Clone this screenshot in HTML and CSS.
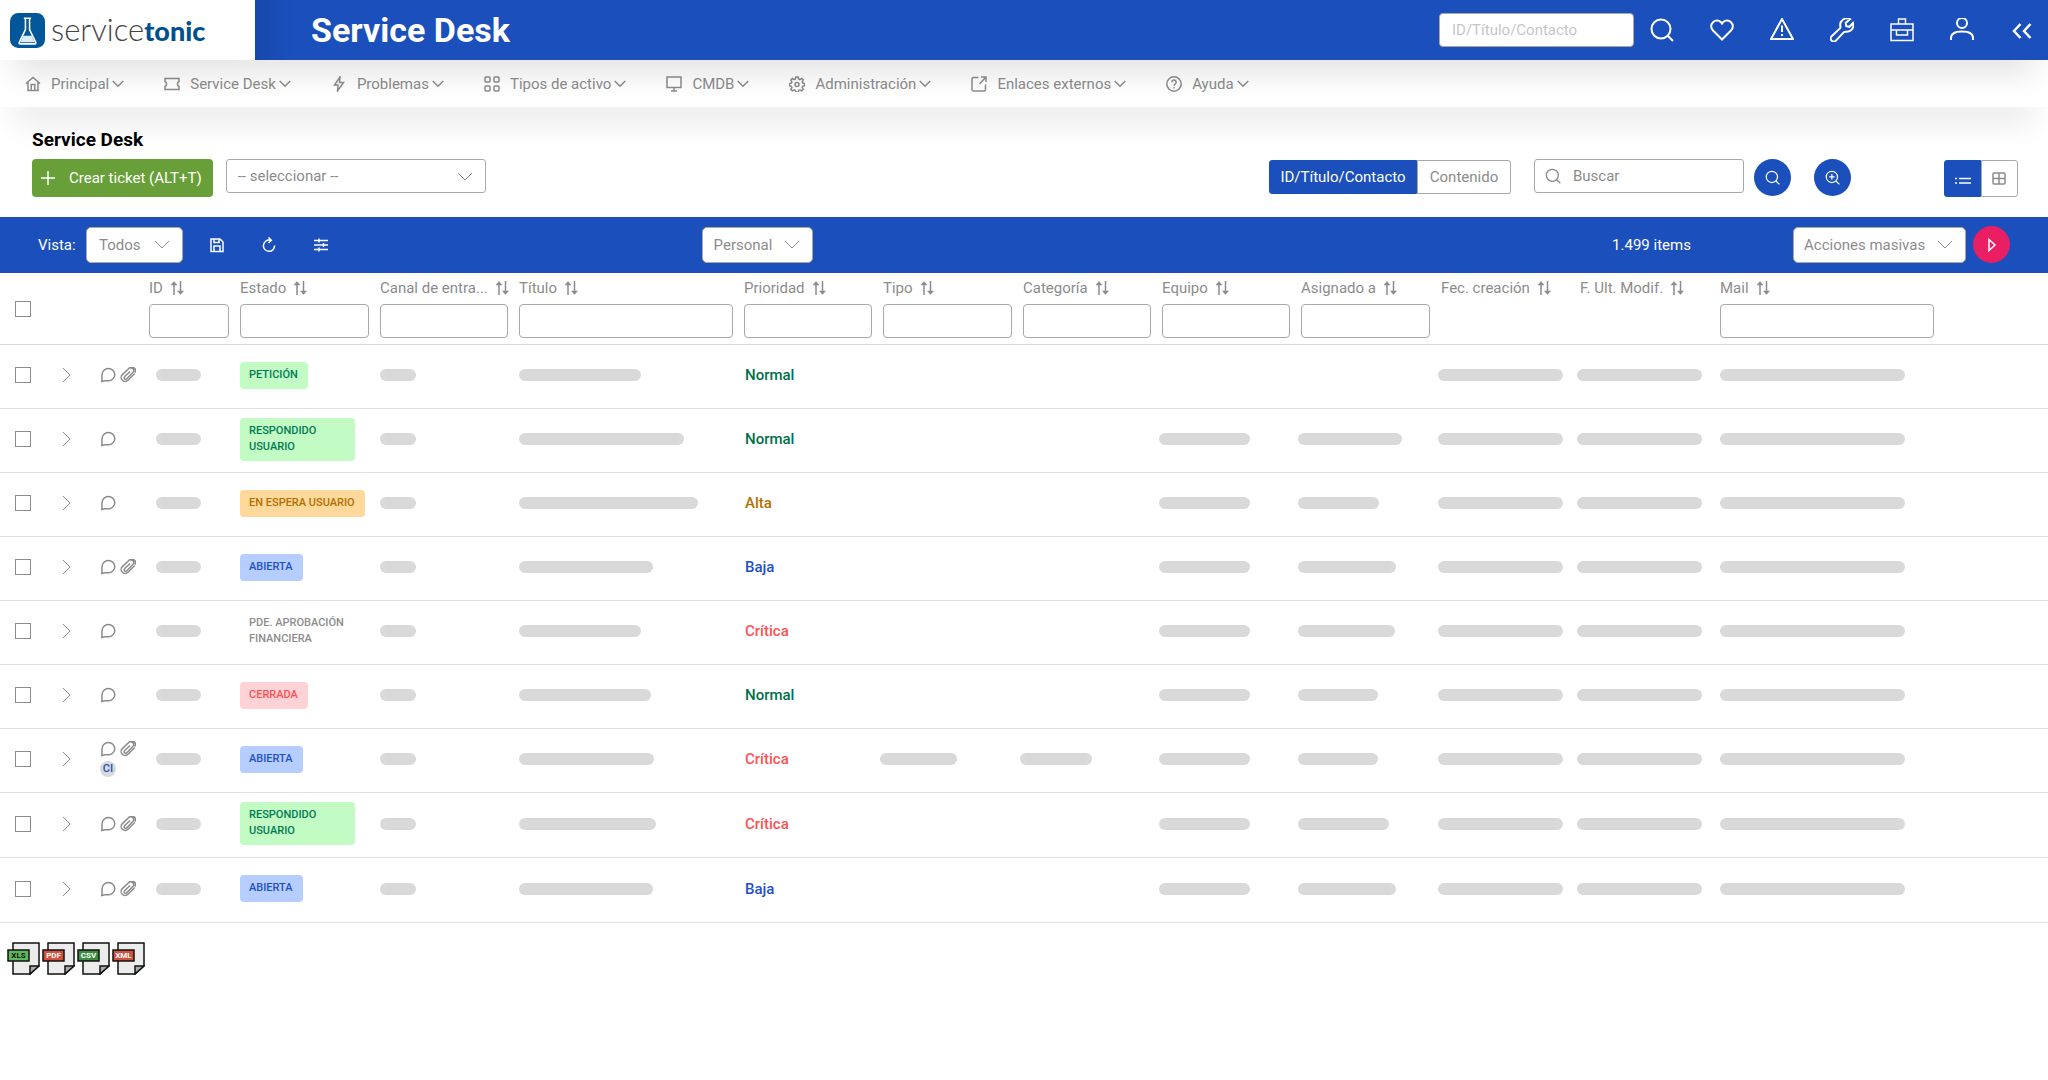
FILE: index.html
```html
<!DOCTYPE html>
<html lang="es">
<head>
<meta charset="utf-8">
<meta name="viewport" content="width=device-width, initial-scale=1">
<title>Service Desk</title>
<link rel="stylesheet" href="styles.css">
</head>
<body>
<svg class="sprite" aria-hidden="true">
  <symbol id="i-chevron" viewBox="0 0 16 10"><path d="M1 1l7 7 7-7"/></symbol>
  <symbol id="i-right" viewBox="0 0 10 16"><path d="M1 1l7 7-7 7"/></symbol>
  <symbol id="i-search" viewBox="0 0 24 24"><circle cx="11" cy="11" r="9"/><path d="M17.5 17.5L23 23"/></symbol>
  <symbol id="i-sort" viewBox="0 0 14 14"><path d="M4 14V2M10.500 0v12"/><path fill="currentColor" stroke-width=".5" d="M1 4L4 .500 7 4zM7.500 10l3 3.500 3-3.500z"/></symbol>
  <symbol id="i-comment" viewBox="0 0 16 16"><path d="M2 14.300V8A6.300 6.300 0 0 1 14.800 7.800 6.300 6.300 0 0 1 8.500 13.800H4.500L1 14.800"/></symbol>
  <symbol id="i-clip" viewBox="0 0 16 16"><path d="M14.700 6.500L8 13.300a4 4 0 0 1-5.700-5.700L8.500 1.800a2.800 2.800 0 0 1 4.500 3.500L6.800 11.800a1.500 1.500 0 0 1-2.300-2L10 4.500M10.500 1.500a2.900 2.900 0 0 1 4.200 4"/></symbol>
  <symbol id="i-file" viewBox="0 0 33 33"><path fill="#ececec" stroke="#111" stroke-width="1.500" d="M6 1h26v23l-9 8H6z"/><path fill="#aaa" stroke="#111" stroke-width="1.500" d="M23 32v-8h9z"/></symbol>
</svg>

<header class="top">
  <a class="brand" href="#" aria-label="servicetonic">
    <svg class="brand-mark" viewBox="0 0 34 34" aria-hidden="true"><rect width="34" height="34" rx="8" fill="#02579a"/><g fill="none" stroke="#fff" stroke-width="1.500"><path d="M13.500 5h7M15 5v11L9 28.500q-.500 1.500 1 1.500h14q1.500 0 1-1.500L19 16V5"/></g><path fill="#dcebf5" d="M13 22h8l3 6.500H10z"/></svg>
    <span class="brand-name">service<b>tonic</b></span>
  </a>
  <div class="top-main">
    <p class="top-title">Service Desk</p>
    <div class="top-tools">
      <input class="top-search" type="text" placeholder="ID/Título/Contacto" aria-label="ID/Título/Contacto">
      <button class="tool" aria-label="Buscar"><svg viewBox="0 0 24 24"><circle cx="11" cy="11" r="9.500"/><path d="M18 18l5 5"/></svg></button>
      <button class="tool" aria-label="Favoritos"><svg viewBox="0 0 24 24"><path d="M12 21.500L3 12.500A5.600 5.600 0 0 1 3 4.200a5.500 5.500 0 0 1 8 0L12 5.500l1-1.300a5.500 5.500 0 0 1 8 0 5.600 5.600 0 0 1 0 8.300z"/></svg></button>
      <button class="tool" aria-label="Alertas"><svg viewBox="0 0 24 24"><path d="M12 1L23 21H1zM12 7.500V14M12 16v2"/></svg></button>
      <button class="tool" aria-label="Herramientas"><svg viewBox="0 0 24 24"><path d="M20 1.200a6.600 6.600 0 0 0-9.600 7.300q.200 1.200-.700 2.100L1.600 18.300a3 3 0 0 0 4.300 4.300l7.800-8.200q.900-.900 2.100-.700A6.600 6.600 0 0 0 23 5l-3.500 3.800-3.200-.600-.600-3.300z"/></svg></button>
      <button class="tool" aria-label="Maletín"><svg viewBox="0 0 24 24"><path stroke-width="1.500" d="M1 6h22v16.500H1zM8.500 6V1h7v5M1 12h22M6.500 12v5h11v-5"/></svg></button>
      <button class="tool" aria-label="Usuario"><svg viewBox="0 0 24 24"><circle cx="12" cy="5" r="5"/><path d="M1 22v-2c0-4 4-6.500 11-6.500s11 2.500 11 6.500v2"/></svg></button>
      <button class="tool" aria-label="Contraer"><svg viewBox="0 0 24 24"><path stroke-width="2.500" d="M10.500 6L4 13l6.500 7M20.500 6L14 13l6.500 7"/></svg></button>
    </div>
  </div>
</header>

<nav class="menu">
  <button><svg class="mi" viewBox="0 0 16 16"><path d="M1 7.500L8 1.500l7 6M3 6v8.500h10V6M6.200 14.500V8.500h3.600v6"/></svg><span>Principal</span><svg class="mc"><use href="#i-chevron"/></svg></button>
  <button><svg class="mi" viewBox="0 0 16 16"><path d="M1 2.500h14v3a2.800 2.800 0 0 0 0 5v3H1v-3a2.800 2.800 0 0 0 0-5z"/></svg><span>Service Desk</span><svg class="mc"><use href="#i-chevron"/></svg></button>
  <button><svg class="mi" viewBox="0 0 16 16"><path d="M9 1L3.500 9H7l-.500 6L12.500 6.500H8.500z"/></svg><span>Problemas</span><svg class="mc"><use href="#i-chevron"/></svg></button>
  <button><svg class="mi" viewBox="0 0 16 16"><rect x="1" y="1" width="5" height="5" rx="1"/><rect x="10" y="1" width="5" height="5" rx="1"/><rect x="1" y="10" width="5" height="5" rx="1"/><rect x="10" y="10" width="5" height="5" rx="1"/></svg><span>Tipos de activo</span><svg class="mc"><use href="#i-chevron"/></svg></button>
  <button><svg class="mi" viewBox="0 0 16 16"><path d="M1 1h14v10.500H1zM8 11.500V15M5 15h6"/></svg><span>CMDB</span><svg class="mc"><use href="#i-chevron"/></svg></button>
  <button><svg class="mi" viewBox="0 0 16 16"><path d="M6.800 1h2.400l.400 2 1.300.600 1.800-1.100 1.600 1.700-1.100 1.700.500 1.200 1.900.500v2.200l-2 .500-.500 1.200 1.100 1.800-1.600 1.600-1.700-1.100-1.300.600-.400 1.900H6.800l-.400-1.900-1.300-.600-1.700 1.100-1.600-1.600 1.100-1.800-.500-1.200-2-.500V7.600l2-.500.500-1.200-1.100-1.700 1.600-1.700 1.700 1.100 1.300-.600z"/><circle cx="8" cy="8.500" r="2"/></svg><span>Administración</span><svg class="mc"><use href="#i-chevron"/></svg></button>
  <button><svg class="mi" viewBox="0 0 16 16"><path d="M7.500 1.500h-5A1.500 1.500 0 0 0 1 3v10.500A1.500 1.500 0 0 0 2.500 15H13a1.500 1.500 0 0 0 1.500-1.500v-5M10 1h5v5M15 1L8.500 8"/></svg><span>Enlaces externos</span><svg class="mc"><use href="#i-chevron"/></svg></button>
  <button><svg class="mi" viewBox="0 0 16 16"><circle cx="8" cy="8" r="7.200"/><path d="M5.800 6.200a2.200 2.200 0 1 1 3.300 1.900Q8 8.700 8 9.800M8 11.200v1.300"/></svg><span>Ayuda</span><svg class="mc"><use href="#i-chevron"/></svg></button>
</nav>

<main>
  <section class="actions">
    <h1>Service Desk</h1>
    <div class="actions-row">
      <button class="create"><svg viewBox="0 0 14 14"><path d="M7 0v14M0 7h14"/></svg><span>Crear ticket (ALT+T)</span></button>
      <span class="pick pick-wide"><select aria-label="Seleccionar"><option>-- seleccionar --</option></select><svg><use href="#i-chevron"/></svg></span>
      <div class="scope"><button class="on">ID/Título/Contacto</button><button>Contenido</button></div>
      <label class="find"><svg><use href="#i-search"/></svg><input type="text" placeholder="Buscar" aria-label="Buscar"></label>
      <button class="round" aria-label="Buscar"><svg><use href="#i-search"/></svg></button>
      <button class="round round-zoom" aria-label="Búsqueda avanzada"><svg viewBox="0 0 24 24"><circle cx="11" cy="11" r="9"/><path d="M17.500 17.500L23 23M11 6.500v9M6.500 11h9"/></svg></button>
      <div class="views"><button class="on" aria-label="Lista"><svg viewBox="0 0 16 16"><path d="M0 7.500h2M4 7.500h12M0 12h2M4 12h12"/></svg></button><button aria-label="Cuadrícula"><svg viewBox="0 0 16 16"><rect x="1" y="2" width="12" height="11" rx="1"/><path d="M7 2v11M1 7.500h12"/></svg></button></div>
    </div>
  </section>

  <section class="bar">
    <div class="bar-left">
      <label for="vista">Vista:</label>
      <span class="pick"><select id="vista"><option>Todos</option></select><svg><use href="#i-chevron"/></svg></span>
      <button class="bar-icon" aria-label="Guardar"><svg viewBox="0 0 16 16"><path d="M2 2h9l3 3v9.500H2zM5 14v-5h6v5M5 2v3.500h5V2"/></svg></button>
      <button class="bar-icon" aria-label="Actualizar"><svg viewBox="0 0 16 16"><path d="M9 3.200A5.600 5.600 0 1 0 13.600 8.500M7.500 .500l2.800 2.700L7.500 6"/></svg></button>
      <button class="bar-icon" aria-label="Filtros"><svg viewBox="0 0 16 16"><path d="M1 3.500h14M1 8h14M1 12.500h14M6 1.500v4M10.500 6v4M6 10.500v4"/></svg></button>
    </div>
    <div><span class="pick pick-personal"><select aria-label="Ámbito"><option>Personal</option></select><svg><use href="#i-chevron"/></svg></span></div>
    <p class="count">1.499 items</p>
    <div class="bar-right">
      <span class="pick pick-mass"><select aria-label="Acciones masivas"><option>Acciones masivas</option></select><svg><use href="#i-chevron"/></svg></span>
      <button class="run" aria-label="Ejecutar"><svg viewBox="0 0 16 16"><path d="M5 2.500v11L11 8z"/></svg></button>
    </div>
  </section>

  <table class="grid">
    <colgroup><col class="w62"><col class="w38"><col class="w49"><col class="w91"><col class="w140"><col class="w139"><col class="w225"><col class="w139"><col class="w140"><col class="w139"><col class="w139"><col class="w140"><col class="w139"><col class="w140"><col class="w328"></colgroup>
    <thead>
      <tr>
        <th class="sel"><input type="checkbox" aria-label="Seleccionar todo"></th><th></th><th></th>
        <th><span class="th">ID <svg><use href="#i-sort"/></svg></span><input type="text" aria-label="Filtrar ID"></th>
        <th><span class="th">Estado <svg><use href="#i-sort"/></svg></span><input type="text" aria-label="Filtrar Estado"></th>
        <th><span class="th">Canal de entra... <svg><use href="#i-sort"/></svg></span><input type="text" aria-label="Filtrar Canal"></th>
        <th><span class="th">Título <svg><use href="#i-sort"/></svg></span><input type="text" aria-label="Filtrar Título"></th>
        <th><span class="th">Prioridad <svg><use href="#i-sort"/></svg></span><input type="text" aria-label="Filtrar Prioridad"></th>
        <th><span class="th">Tipo <svg><use href="#i-sort"/></svg></span><input type="text" aria-label="Filtrar Tipo"></th>
        <th><span class="th">Categoría <svg><use href="#i-sort"/></svg></span><input type="text" aria-label="Filtrar Categoría"></th>
        <th><span class="th">Equipo <svg><use href="#i-sort"/></svg></span><input type="text" aria-label="Filtrar Equipo"></th>
        <th><span class="th">Asignado a <svg><use href="#i-sort"/></svg></span><input type="text" aria-label="Filtrar Asignado a"></th>
        <th><span class="th">Fec. creación <svg><use href="#i-sort"/></svg></span></th>
        <th><span class="th">F. Ult. Modif. <svg><use href="#i-sort"/></svg></span></th>
        <th class="mail"><span class="th">Mail <svg><use href="#i-sort"/></svg></span><input type="text" aria-label="Filtrar Mail"></th>
      </tr>
    </thead>
    <tbody>
      <tr>
        <td class="sel"><input type="checkbox" aria-label="Seleccionar fila 1"></td>
        <td><button class="open" aria-label="Desplegar"><svg><use href="#i-right"/></svg></button></td>
        <td><span class="marks"><svg><use href="#i-comment"/></svg><svg><use href="#i-clip"/></svg></span></td>
        <td class="id"><span class="ph"></span></td>
        <td><span class="tag green">PETICIÓN</span></td>
        <td class="canal"><span class="ph"></span></td>
        <td><span class="ph" style="width:122px"></span></td>
        <td class="prio normal">Normal</td>
        <td></td><td></td><td></td><td></td>
        <td class="date"><span class="ph"></span></td><td class="date"><span class="ph"></span></td><td class="mail"><span class="ph"></span></td>
      </tr>
      <tr>
        <td class="sel"><input type="checkbox" aria-label="Seleccionar fila 2"></td>
        <td><button class="open" aria-label="Desplegar"><svg><use href="#i-right"/></svg></button></td>
        <td><span class="marks"><svg><use href="#i-comment"/></svg></span></td>
        <td class="id"><span class="ph"></span></td>
        <td><span class="tag green two">RESPONDIDO USUARIO</span></td>
        <td class="canal"><span class="ph"></span></td>
        <td><span class="ph" style="width:165px"></span></td>
        <td class="prio normal">Normal</td>
        <td></td><td></td>
        <td class="team"><span class="ph"></span></td><td class="team"><span class="ph" style="width:104px"></span></td>
        <td class="date"><span class="ph"></span></td><td class="date"><span class="ph"></span></td><td class="mail"><span class="ph"></span></td>
      </tr>
      <tr>
        <td class="sel"><input type="checkbox" aria-label="Seleccionar fila 3"></td>
        <td><button class="open" aria-label="Desplegar"><svg><use href="#i-right"/></svg></button></td>
        <td><span class="marks"><svg><use href="#i-comment"/></svg></span></td>
        <td class="id"><span class="ph"></span></td>
        <td><span class="tag orange">EN ESPERA USUARIO</span></td>
        <td class="canal"><span class="ph"></span></td>
        <td><span class="ph" style="width:179px"></span></td>
        <td class="prio high">Alta</td>
        <td></td><td></td>
        <td class="team"><span class="ph"></span></td><td class="team"><span class="ph" style="width:81px"></span></td>
        <td class="date"><span class="ph"></span></td><td class="date"><span class="ph"></span></td><td class="mail"><span class="ph"></span></td>
      </tr>
      <tr>
        <td class="sel"><input type="checkbox" aria-label="Seleccionar fila 4"></td>
        <td><button class="open" aria-label="Desplegar"><svg><use href="#i-right"/></svg></button></td>
        <td><span class="marks"><svg><use href="#i-comment"/></svg><svg><use href="#i-clip"/></svg></span></td>
        <td class="id"><span class="ph"></span></td>
        <td><span class="tag blue">ABIERTA</span></td>
        <td class="canal"><span class="ph"></span></td>
        <td><span class="ph" style="width:134px"></span></td>
        <td class="prio low">Baja</td>
        <td></td><td></td>
        <td class="team"><span class="ph"></span></td><td class="team"><span class="ph" style="width:98px"></span></td>
        <td class="date"><span class="ph"></span></td><td class="date"><span class="ph"></span></td><td class="mail"><span class="ph"></span></td>
      </tr>
      <tr>
        <td class="sel"><input type="checkbox" aria-label="Seleccionar fila 5"></td>
        <td><button class="open" aria-label="Desplegar"><svg><use href="#i-right"/></svg></button></td>
        <td><span class="marks"><svg><use href="#i-comment"/></svg></span></td>
        <td class="id"><span class="ph"></span></td>
        <td><span class="tag two">PDE. APROBACIÓN FINANCIERA</span></td>
        <td class="canal"><span class="ph"></span></td>
        <td><span class="ph" style="width:122px"></span></td>
        <td class="prio critical">Crítica</td>
        <td></td><td></td>
        <td class="team"><span class="ph"></span></td><td class="team"><span class="ph" style="width:97px"></span></td>
        <td class="date"><span class="ph"></span></td><td class="date"><span class="ph"></span></td><td class="mail"><span class="ph"></span></td>
      </tr>
      <tr>
        <td class="sel"><input type="checkbox" aria-label="Seleccionar fila 6"></td>
        <td><button class="open" aria-label="Desplegar"><svg><use href="#i-right"/></svg></button></td>
        <td><span class="marks"><svg><use href="#i-comment"/></svg></span></td>
        <td class="id"><span class="ph"></span></td>
        <td><span class="tag red">CERRADA</span></td>
        <td class="canal"><span class="ph"></span></td>
        <td><span class="ph" style="width:132px"></span></td>
        <td class="prio normal">Normal</td>
        <td></td><td></td>
        <td class="team"><span class="ph"></span></td><td class="team"><span class="ph" style="width:80px"></span></td>
        <td class="date"><span class="ph"></span></td><td class="date"><span class="ph"></span></td><td class="mail"><span class="ph"></span></td>
      </tr>
      <tr>
        <td class="sel"><input type="checkbox" aria-label="Seleccionar fila 7"></td>
        <td><button class="open" aria-label="Desplegar"><svg><use href="#i-right"/></svg></button></td>
        <td><span class="marks"><svg><use href="#i-comment"/></svg><svg><use href="#i-clip"/></svg><b class="ci">CI</b></span></td>
        <td class="id"><span class="ph"></span></td>
        <td><span class="tag blue">ABIERTA</span></td>
        <td class="canal"><span class="ph"></span></td>
        <td><span class="ph" style="width:135px"></span></td>
        <td class="prio critical">Crítica</td>
        <td class="team"><span class="ph" style="width:77px"></span></td><td class="team"><span class="ph" style="width:72px"></span></td>
        <td class="team"><span class="ph"></span></td><td class="team"><span class="ph" style="width:80px"></span></td>
        <td class="date"><span class="ph"></span></td><td class="date"><span class="ph"></span></td><td class="mail"><span class="ph"></span></td>
      </tr>
      <tr>
        <td class="sel"><input type="checkbox" aria-label="Seleccionar fila 8"></td>
        <td><button class="open" aria-label="Desplegar"><svg><use href="#i-right"/></svg></button></td>
        <td><span class="marks"><svg><use href="#i-comment"/></svg><svg><use href="#i-clip"/></svg></span></td>
        <td class="id"><span class="ph"></span></td>
        <td><span class="tag green two">RESPONDIDO USUARIO</span></td>
        <td class="canal"><span class="ph"></span></td>
        <td><span class="ph" style="width:137px"></span></td>
        <td class="prio critical">Crítica</td>
        <td></td><td></td>
        <td class="team"><span class="ph"></span></td><td class="team"><span class="ph" style="width:91px"></span></td>
        <td class="date"><span class="ph"></span></td><td class="date"><span class="ph"></span></td><td class="mail"><span class="ph"></span></td>
      </tr>
      <tr>
        <td class="sel"><input type="checkbox" aria-label="Seleccionar fila 9"></td>
        <td><button class="open" aria-label="Desplegar"><svg><use href="#i-right"/></svg></button></td>
        <td><span class="marks"><svg><use href="#i-comment"/></svg><svg><use href="#i-clip"/></svg></span></td>
        <td class="id"><span class="ph"></span></td>
        <td><span class="tag blue">ABIERTA</span></td>
        <td class="canal"><span class="ph"></span></td>
        <td><span class="ph" style="width:134px"></span></td>
        <td class="prio low">Baja</td>
        <td></td><td></td>
        <td class="team"><span class="ph"></span></td><td class="team"><span class="ph" style="width:98px"></span></td>
        <td class="date"><span class="ph"></span></td><td class="date"><span class="ph"></span></td><td class="mail"><span class="ph"></span></td>
      </tr>
    </tbody>
  </table>

  <footer class="exports">
    <a href="#"><svg viewBox="0 0 33 33"><use href="#i-file"/><rect x="1" y="8" width="21" height="11" fill="#5cb85c" stroke="#111" stroke-width="1.500"/><text x="11.500" y="16" fill="#111">XLS</text></svg></a>
    <a href="#"><svg viewBox="0 0 33 33"><use href="#i-file"/><rect x="1" y="8" width="21" height="11" fill="#d2503c" stroke="#111" stroke-width="1.500"/><text x="11.500" y="16" fill="#fff">PDF</text></svg></a>
    <a href="#"><svg viewBox="0 0 33 33"><use href="#i-file"/><rect x="1" y="8" width="21" height="11" fill="#3a8c3f" stroke="#111" stroke-width="1.500"/><text x="11.500" y="16" fill="#fff">CSV</text></svg></a>
    <a href="#"><svg viewBox="0 0 33 33"><use href="#i-file"/><rect x="1" y="8" width="21" height="11" fill="#d2503c" stroke="#111" stroke-width="1.500"/><text x="11.500" y="16" fill="#fff">XML</text></svg></a>
  </footer>
</main>
</body>
</html>
```

FILE: styles.css
```css
:root {
  --blue: #1a4fbc;
  --gray: #8c8c8c;
  --line: #a8a8a8;
}
* { box-sizing: border-box; }
body {
  margin: 0;
  background: #fff;
  color: var(--gray);
  font: 15px/20px Roboto, "Liberation Sans", sans-serif;
}
p, h1 { margin: 0; }
svg { display: block; fill: none; stroke: currentColor; flex: none; }
.sprite { position: absolute; width: 0; height: 0; }
button, input, select { font: inherit; color: inherit; margin: 0; }
button { border: 0; padding: 0; background: none; cursor: pointer; }
input[type="text"], select {
  height: 34px;
  border: 1px solid var(--line);
  border-radius: 4px;
  background: #fff;
}
input[type="checkbox"] {
  appearance: none;
  display: block;
  width: 16px;
  height: 16px;
  margin: 0;
  border: 1px solid var(--gray);
  background: #fff;
}

/* Header */
.top {
  position: relative;
  z-index: 2;
  display: flex;
  height: 60px;
  box-shadow: 0 26px 32px -14px rgba(0, 0, 0, .13);
}
.brand {
  display: flex;
  align-items: center;
  gap: 6px;
  width: 255px;
  padding-left: 10px;
  background: #fff;
  color: #444;
  text-decoration: none;
}
.brand-mark { width: 35px; height: 35px; stroke: none; }
.brand-name { font: 300 31px/32px Lato, sans-serif; }
.brand-name b { color: #00508f; font-size: 27px; font-weight: 900; }
.top-main {
  flex: 1;
  display: flex;
  align-items: center;
  justify-content: space-between;
  padding: 0 14px 0 56px;
  background: linear-gradient(to right, rgba(0, 0, 0, .1), transparent 36px) var(--blue);
  color: #fff;
}
.top-title { font-size: 34px; line-height: 40px; font-weight: 700; }
.top-tools { display: flex; align-items: center; gap: 36px; }
.top-search {
  width: 195px;
  padding: 0 12px;
  margin-right: -20px;
}
.top-search::placeholder { color: #c6c6c6; }
.tool svg { width: 24px; height: 24px; stroke-width: 2; }

/* Main menu */
.menu {
  position: relative;
  z-index: 1;
  display: flex;
  align-items: center;
  gap: 40px;
  height: 47px;
  padding-left: 25px;
  background: #fff;
  box-shadow: 0 26px 32px -14px rgba(0, 0, 0, .13);
}
.menu button { display: flex; align-items: center; white-space: nowrap; }
.mi { width: 16px; height: 16px; margin-right: 10px; stroke-width: 1.5; }
.mc { width: 12px; height: 8px; margin-left: 3px; stroke-width: 2; }

/* Page actions */
.actions { padding: 23px 30px 20px 32px; }
.actions h1 { color: #000; font-size: 19px; line-height: 20px; font-weight: 700; }
.actions-row { display: flex; align-items: flex-start; height: 38px; margin-top: 9px; }
.create {
  display: flex;
  align-items: center;
  gap: 14px;
  height: 38px;
  padding: 0 11px 0 9px;
  border-radius: 4px;
  background: #689f38;
  color: #fff;
}
.create svg { width: 14px; height: 14px; stroke-width: 1.5; }
.pick { position: relative; display: block; }
.pick select {
  appearance: none;
  display: block;
  width: 97px;
  height: 36px;
  padding: 0 12px;
  border-radius: 5px;
}
.pick svg {
  position: absolute;
  right: 13px;
  top: 13px;
  width: 16px;
  height: 10px;
  pointer-events: none;
}
.pick-wide { margin-left: 13px; margin-right: auto; }
.pick-wide select { width: 260px; height: 34px; padding: 0 11px; border-radius: 3px; }
.pick-personal { width: 111px; }
.pick-personal select { width: 111px; padding: 0 11px; }
.pick-mass select { width: 173px; padding: 0 10px; }
.scope, .views { display: flex; margin-top: 1px; }
.scope { height: 34px; margin-right: 23px; }
.scope button { width: 94px; border: 1px solid var(--line); border-radius: 0 3px 3px 0; }
.scope .on { width: 148px; border-color: var(--blue); border-radius: 3px 0 0 3px; }
.on { background: var(--blue); color: #fff; }
.find {
  display: flex;
  align-items: center;
  gap: 12px;
  width: 210px;
  height: 34px;
  padding-left: 10px;
  margin-right: 10px;
  border: 1px solid var(--line);
  border-radius: 3px;
}
.find svg { width: 16px; height: 16px; stroke-width: 2; }
.find input { flex: 1; min-width: 0; height: 32px; padding: 0; border: 0; }
.find input::placeholder { color: var(--gray); }
.round, .run {
  display: grid;
  place-items: center;
  width: 37px;
  height: 37px;
  border-radius: 50%;
  background: var(--blue);
  color: #fff;
}
.round svg { width: 15px; height: 15px; stroke-width: 2; }
.round-zoom { margin-left: 23px; margin-right: 93px; }
.views { height: 37px; }
.views button {
  display: grid;
  place-items: center;
  width: 37px;
  border: 1px solid var(--line);
  border-radius: 0 3px 3px 0;
}
.views .on { border-color: var(--blue); border-radius: 3px 0 0 3px; }
.views svg { width: 16px; height: 16px; stroke-width: 1.5; }

/* View bar */
.bar {
  display: grid;
  grid-template-columns: 664fr 911fr 181fr auto;
  align-items: center;
  height: 56px;
  padding: 0 38px 1px;
  background: var(--blue);
}
.bar-left, .bar-right { display: flex; align-items: center; }
.bar-left label { width: 48px; color: #fff; }
.bar .pick { color: var(--gray); }
.bar-icon { margin-left: 36px; color: #fff; }
.bar-icon:first-of-type { margin-left: 26px; }
.bar-icon svg { width: 16px; height: 16px; stroke-width: 1.5; }
.count { color: #fff; }
.bar-right { gap: 7px; }
.run { background: #e91e63; }
.run svg { width: 16px; height: 16px; stroke-width: 1.5; }

/* Ticket table */
.grid { width: 100%; table-layout: fixed; border-collapse: separate; border-spacing: 0; }
.w38 { width: 38px; }
.w49 { width: 49px; }
.w62 { width: 62px; }
.w91 { width: 91px; }
.w139 { width: 139px; }
.w140 { width: 140px; }
.w225 { width: 225px; }
.w328 { width: 328px; }
.grid th {
  height: 72px;
  padding: 5px 11px 0 0;
  border-bottom: 1px solid #d8d8d8;
  font-weight: 400;
  text-align: left;
  vertical-align: top;
}
.grid td {
  height: 64px;
  padding: 0 11px 3px 0;
  border-bottom: 1px solid #e0e0e0;
  vertical-align: middle;
}
.grid tr:nth-last-child(-n+2) td { height: 65px; }
.grid .sel { padding-top: 0; padding-left: 15px; vertical-align: middle; }
.th { display: flex; align-items: center; gap: 7px; height: 20px; white-space: nowrap; }
.th svg { width: 14px; height: 14px; stroke-width: 1.5; }
.grid th input[type="text"] { display: block; width: 100%; margin-top: 6px; }
.grid .mail input { max-width: 214px; }
.open { display: block; }
.open svg { width: 10px; height: 16px; }
.marks { display: flex; flex-wrap: wrap; gap: 4px; width: 36px; }
.marks svg { width: 16px; height: 16px; stroke-width: 1.5; }
.ci {
  width: 16px;
  height: 16px;
  border-radius: 50%;
  background: #d9d9d9;
  color: var(--blue);
  font-size: 11px;
  line-height: 16px;
  font-weight: 500;
  text-align: center;
}
.ph { display: block; height: 12px; border-radius: 6px; background: #d9d9d9; }
.id .ph { width: 45px; margin-left: 7px; }
.canal .ph { width: 36px; }
.team .ph { width: 91px; margin-left: -3px; }
.date .ph { width: 125px; margin-left: -3px; }
.mail .ph { width: 185px; }
.tag {
  display: inline-block;
  padding: 5px 10px 6px 9px;
  border-radius: 4px;
  font-size: 11px;
  line-height: 16px;
  font-weight: 500;
  vertical-align: middle;
  white-space: nowrap;
}
.two { width: 115px; padding-right: 0; white-space: normal; }
.green { background: #c2fbc3; color: #007a55; }
.orange { background: #ffd89c; color: #b07000; }
.blue { background: #b6ceff; color: #1f50c4; }
.red { background: #ffd2d5; color: #ff5055; }
.prio { font-weight: 500; }
.grid .prio { padding-left: 1px; }
.normal { color: #00704c; }
.high { color: #b07000; }
.low { color: #1f50c4; }
.critical { color: #ff5055; }

/* Export links */
.exports { display: flex; gap: 2px; padding: 19px 7px; }
.exports svg { width: 33px; height: 33px; }
.exports text {
  font: 700 8px Roboto, sans-serif;
  text-anchor: middle;
  stroke: none;
}
```
